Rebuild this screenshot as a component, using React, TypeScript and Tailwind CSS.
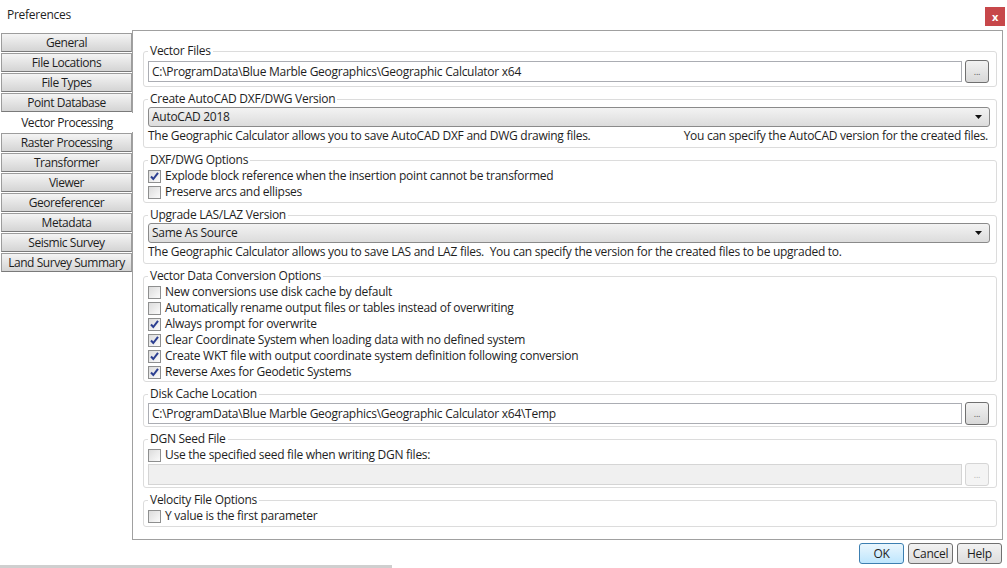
import React from 'react';

const tabs = [
  'General',
  'File Locations',
  'File Types',
  'Point Database',
  'Vector Processing',
  'Raster Processing',
  'Transformer',
  'Viewer',
  'Georeferencer',
  'Metadata',
  'Seismic Survey',
  'Land Survey Summary',
];

const CheckBox = ({ checked }: { checked?: boolean }) => (
  <span className="w-[13px] h-[13px] shrink-0 border border-[#8e8f8f] bg-gradient-to-br from-[#dcdcdc] to-[#fbfbfb] flex items-center justify-center">
    {checked && (
      <svg width="11" height="11" viewBox="0 0 11 11">
        <path d="M2 5.5 L4.3 8 L9 1.8" fill="none" stroke="#2c3f91" strokeWidth="2" />
      </svg>
    )}
  </span>
);

const Check = ({ label, checked }: { label: string; checked?: boolean }) => (
  <div className="h-[16px] flex items-center gap-[4px]">
    <CheckBox checked={checked} />
    <span>{label}</span>
  </div>
);

const Group = ({
  title,
  tight,
  children,
}: {
  title: string;
  tight?: boolean;
  children: React.ReactNode;
}) => (
  <fieldset
    className={
      'border border-[#dcdcdc] rounded-[3px] px-[4px] mx-0 ' + (tight ? 'pb-[1px]' : 'pb-[2px]')
    }
  >
    <legend className="ml-0 px-[2px] h-[16px] leading-[16px]">{title}</legend>
    {children}
  </fieldset>
);

const Browse = ({ disabled }: { disabled?: boolean }) => (
  <button
    className={
      'w-[24px] h-[23px] rounded-[3px] border text-[9px] leading-none flex items-center justify-center ' +
      (disabled
        ? 'border-[#d5d5d5] bg-[#f4f4f4] text-[#b5b5b5]'
        : 'border-[#707070] bg-gradient-to-b from-[#f2f2f2] to-[#d8d8d8] text-[#555]')
    }
  >
    ...
  </button>
);

const Select = ({ value }: { value: string }) => (
  <div className="h-[20px] rounded-[3px] border border-[#8a8a8a] bg-gradient-to-b from-[#f3f3f3] to-[#dcdcdc] flex items-center justify-between pl-[3px] pr-[7px]">
    <span>{value}</span>
    <svg width="7" height="4" viewBox="0 0 7 4">
      <path d="M0 0 H7 L3.5 4 Z" fill="#111" />
    </svg>
  </div>
);

const PathInput = ({ value, disabled }: { value?: string; disabled?: boolean }) => (
  <div className="flex items-center gap-[3px]">
    <div
      className={
        'flex-1 h-[21px] border flex items-center pl-[3px] ' +
        (disabled ? 'border-[#d5d5d5] bg-[#f0f0f0]' : 'border-[#abadb3] bg-white')
      }
    >
      {value}
    </div>
    <Browse disabled={disabled} />
  </div>
);

export default function App() {
  return (
    <div className="w-[1007px] h-[568px] bg-white relative overflow-hidden font-['Segoe_UI','Open_Sans',sans-serif] text-[12px] leading-[16px] text-[#1e1e1e] tracking-[-0.27px]">
      {/* title bar */}
      <div className="h-[30px] flex items-start justify-between pl-[7px] pr-[2px]">
        <span className="mt-[7px]">Preferences</span>
        <button className="mt-[7px] w-[20px] h-[19px] bg-[#c7474a] text-white text-[11px] font-bold leading-none flex items-center justify-center">
          x
        </button>
      </div>

      <div className="flex">
        {/* tab strip */}
        <div className="w-[132px] shrink-0 pt-[3px] pl-[1px] flex flex-col gap-[1px] relative z-10 tracking-[-0.45px]">
          {tabs.map((t) =>
            t === 'Vector Processing' ? (
              <div key={t} className="h-[19px] bg-white -mr-[1px] flex items-center justify-center">
                {t}
              </div>
            ) : (
              <div
                key={t}
                className="h-[19px] border border-[#9c9c9c] border-b-[#7a7a7a] bg-gradient-to-b from-[#f4f4f4] to-[#d4d4d4] flex items-center justify-center"
              >
                {t}
              </div>
            )
          )}
        </div>

        {/* panel */}
        <div className="w-[871px] h-[510px] border border-[#a0a0a0] pt-[12px] pl-[10px] pr-[5px] flex flex-col gap-[4px]">
          <Group title="Vector Files">
            <div className="pt-[1px] pb-[1px] pr-[3px]">
              <PathInput value="C:\ProgramData\Blue Marble Geographics\Geographic Calculator x64" />
            </div>
          </Group>

          <Group title="Create AutoCAD DXF/DWG Version">
            <div className="pr-[2px] pb-[1px]">
              <Select value="AutoCAD 2018" />
              <div className="flex justify-between pt-[1px] pr-[2px]">
                <span>The Geographic Calculator allows you to save AutoCAD DXF and DWG drawing files.</span>
                <span>You can specify the AutoCAD version for the created files.</span>
              </div>
            </div>
          </Group>

          <Group title="DXF/DWG Options">
            <Check label="Explode block reference when the insertion point cannot be transformed" checked />
            <Check label="Preserve arcs and ellipses" />
          </Group>

          <Group title="Upgrade LAS/LAZ Version">
            <div className="pr-[2px] pb-[1px]">
              <Select value="Same As Source" />
              <div className="pt-[1px]">
                The Geographic Calculator allows you to save LAS and LAZ files.&nbsp; You can specify the version for the created files to be upgraded to.
              </div>
            </div>
          </Group>

          <Group title="Vector Data Conversion Options" tight>
            <Check label="New conversions use disk cache by default" />
            <Check label="Automatically rename output files or tables instead of overwriting" />
            <Check label="Always prompt for overwrite" checked />
            <Check label="Clear Coordinate System when loading data with no defined system" checked />
            <Check label="Create WKT file with output coordinate system definition following conversion" checked />
            <Check label="Reverse Axes for Geodetic Systems" checked />
          </Group>

          <Group title="Disk Cache Location" tight>
            <div className="pr-[3px]">
              <PathInput value="C:\ProgramData\Blue Marble Geographics\Geographic Calculator x64\Temp" />
            </div>
          </Group>

          <Group title="DGN Seed File" tight>
            <Check label="Use the specified seed file when writing DGN files:" />
            <div className="pr-[3px]">
              <PathInput disabled />
            </div>
          </Group>

          <Group title="Velocity File Options">
            <Check label="Y value is the first parameter" />
          </Group>
        </div>
      </div>

      {/* dialog buttons */}
      <div className="flex justify-end gap-[4px] pr-[5px] pt-[3px]">
        <button className="w-[45px] h-[21px] rounded-[3px] border border-[#3c7fb1] bg-gradient-to-b from-[#eaf6fd] to-[#bee6fd]">
          OK
        </button>
        <button className="w-[45px] h-[21px] rounded-[3px] border border-[#707070] bg-gradient-to-b from-[#f2f2f2] to-[#dddddd]">
          Cancel
        </button>
        <button className="w-[45px] h-[21px] rounded-[3px] border border-[#707070] bg-gradient-to-b from-[#f2f2f2] to-[#dddddd]">
          Help
        </button>
      </div>
      <div className="mt-[1px] w-[392px] h-[3px] bg-[#cfcfcf]" />
    </div>
  );
}
